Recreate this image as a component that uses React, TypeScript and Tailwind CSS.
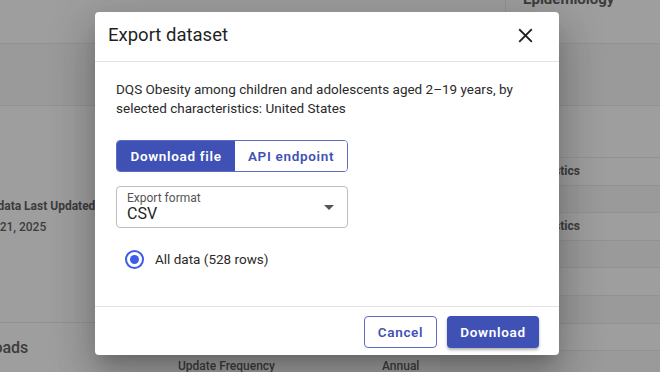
import React from "react";

export default function App() {
  return (
    <div
      className="relative w-[660px] h-[372px] overflow-hidden bg-[#9e9e9e] text-[#3a3a3a]"
      style={{ fontFamily: "Roboto, 'Liberation Sans', sans-serif" }}
    >
      {/* dimmed page behind the dialog */}
      <div className="flex flex-col w-full h-full">
        <div className="flex shrink-0 h-[44px] border-b border-[#929292]">
          <div className="w-[505px] shrink-0" />
          <div className="flex-1 border-l border-[#929292] pl-[17px] -mt-[11px] leading-[20px]">
            <span className="text-[15px] font-bold text-[#3c3c3c]">Epidemiology</span>
          </div>
        </div>
        <div className="shrink-0 h-[62px] border-b border-[#929292] bg-[#9a9a9a]" />
        <div className="flex flex-1 min-h-0">
          <div className="w-[440px] shrink-0 flex flex-col">
            <div className="shrink-0 h-[217px] border-b border-[#929292] flex flex-col pt-[92px] -ml-[30px]">
              <span className="text-[12px] font-bold text-[#3c3c3c] leading-[16px] whitespace-nowrap">Metadata Last Updated</span>
              <span className="text-[12px] font-medium text-[#3c3c3c] leading-[16px] mt-[5px] ml-[7px] whitespace-nowrap">Feb 21, 2025</span>
            </div>
            <div className="shrink-0 -ml-[51px] pt-[14px] text-[16px] font-medium text-[#3c3c3c] leading-[22px]">Downloads</div>
            <div className="shrink-0 flex pl-[178px] text-[12px] font-medium text-[#3c3c3c] leading-[14px]">
              <span className="w-[204px] shrink-0">Update Frequency</span>
              <span className="shrink-0">Annual</span>
            </div>
          </div>
          <div className="flex-1 flex flex-col">
            <div className="shrink-0 h-[52px] border-b border-[#929292]" />
            {["Characteristics", "", "Characteristics", "", "", "", "", ""].map((t, i) => (
              <div
                key={i}
                className={`shrink-0 h-[27.6px] border-b border-[#929292] flex items-center pl-[58px] text-[12px] font-bold text-[#3c3c3c] ${i % 2 === 1 ? "bg-[#9a9a9a]" : ""}`}
              >
                {t}
              </div>
            ))}
          </div>
        </div>
      </div>

      {/* dialog */}
      <div className="absolute left-[95px] top-[12px] w-[464px] h-[343px] bg-white rounded-[4px] shadow-[0_11px_15px_-7px_rgba(0,0,0,0.2),0_24px_38px_3px_rgba(0,0,0,0.14),0_9px_46px_8px_rgba(0,0,0,0.12)] flex flex-col">
        <div className="h-[50px] shrink-0 flex items-center justify-between pl-[13px] pr-[26px] border-b border-[#e3e3e3]">
          <span className="text-[18.5px] text-[#1f1f1f] leading-none pb-[2px]">Export dataset</span>
          <svg width="15" height="15" viewBox="0 0 16 16" className="mb-[2px]">
            <path d="M2 2 L14 14 M14 2 L2 14" stroke="#1f1f1f" strokeWidth="2" strokeLinecap="square" />
          </svg>
        </div>
        <div className="flex-1 px-[21px] pt-[18px] flex flex-col">
          <p className="text-[13.5px] leading-[19px] text-[#2a2a2a] w-[400px]">
            DQS Obesity among children and adolescents aged 2–19 years, by selected characteristics: United States
          </p>
          <div className="mt-[22px] flex w-[232px] h-[32px] rounded-[4px] border border-[#5c6bc0] overflow-hidden">
            <div className="w-[118px] bg-[#3f51b5] text-white text-[13.5px] font-semibold tracking-[0.05em] flex items-center justify-center">
              Download file
            </div>
            <div className="flex-1 bg-white text-[#3f51b5] text-[13.5px] font-semibold tracking-[0.05em] flex items-center justify-center">
              API endpoint
            </div>
          </div>
          <div className="mt-[14px] w-[232px] h-[42px] rounded-[4px] border border-[#bdbdbd] flex items-center justify-between pl-[10px] pr-[13px]">
            <div className="flex flex-col">
              <span className="text-[12px] leading-[14px] text-[#555]">Export format</span>
              <span className="text-[16px] leading-[18px] text-[#1f1f1f]">CSV</span>
            </div>
            <svg width="10" height="5" viewBox="0 0 10 5">
              <path d="M0 0 L10 0 L5 5 Z" fill="#555" />
            </svg>
          </div>
          <div className="mt-[21px] flex items-center h-[20px] pl-[9px]">
            <div className="w-[19px] h-[19px] rounded-full border-2 border-[#3f5ce6] flex items-center justify-center">
              <div className="w-[9px] h-[9px] rounded-full bg-[#3f5ce6]" />
            </div>
            <span className="ml-[11px] text-[13.5px] text-[#2a2a2a]">All data (528 rows)</span>
          </div>
        </div>
        <div className="h-[49px] shrink-0 border-t border-[#e3e3e3] flex items-start justify-end pt-[9px] pr-[20px] gap-[10px]">
          <div className="w-[73px] h-[32px] rounded-[4px] border border-[#5c6bc0] bg-white text-[#3f51b5] text-[13.5px] font-semibold tracking-[0.05em] flex items-center justify-center">
            Cancel
          </div>
          <div className="w-[92px] h-[32px] rounded-[4px] bg-[#3f51b5] text-white text-[13.5px] font-semibold tracking-[0.05em] flex items-center justify-center shadow-[0_2px_3px_rgba(0,0,0,0.3)]">
            Download
          </div>
        </div>
      </div>
    </div>
  );
}
